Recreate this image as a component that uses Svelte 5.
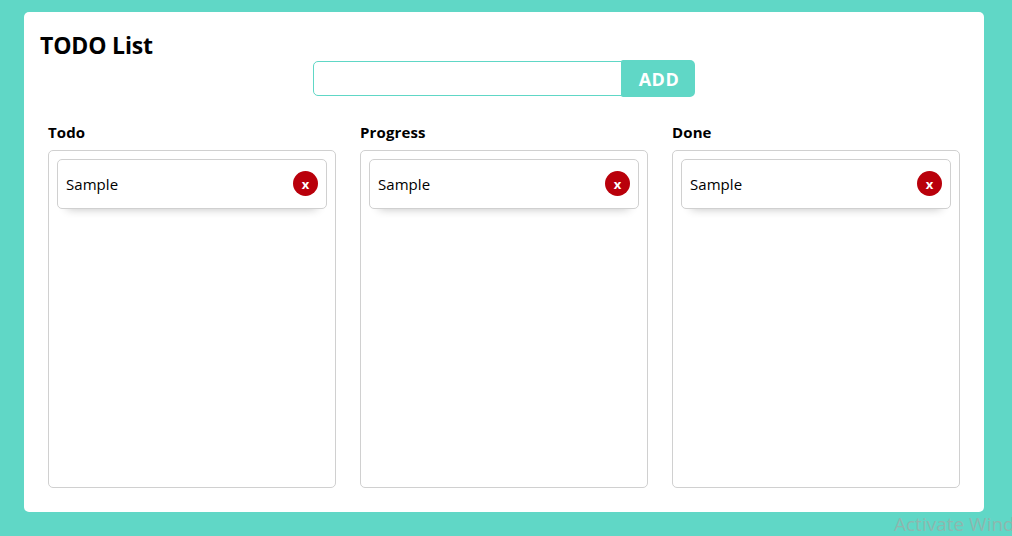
<script>
  let columns = $state([
    { name: 'Todo', items: ['Sample'] },
    { name: 'Progress', items: ['Sample'] },
    { name: 'Done', items: ['Sample'] }
  ]);
  let draft = $state('');

  function add(event) {
    event.preventDefault();
    if (!draft.trim()) return;
    columns[0].items.push(draft.trim());
    draft = '';
  }
</script>

<div class="page">
  <main class="board">
    <h1>TODO List</h1>
    <form class="entry" onsubmit={add}>
      <input bind:value={draft} />
      <button class="add">ADD</button>
    </form>
    <div class="columns">
      {#each columns as column}
        <section>
          <h2>{column.name}</h2>
          <div class="list">
            {#each column.items as item, i}
              <div class="item">
                <span class="label">{item}</span>
                <button class="remove" onclick={() => column.items.splice(i, 1)}>x</button>
              </div>
            {/each}
          </div>
        </section>
      {/each}
    </div>
  </main>
  <div class="watermark">Activate Windows</div>
</div>

<style>
  :global(body) { margin: 0; }
  .page {
    position: relative;
    box-sizing: border-box;
    height: 536px;
    padding: 12px 28px 24px 24px;
    overflow: hidden;
    background: #60d7c6;
    color: #000;
    font-family: "Open Sans", "Noto Sans", sans-serif;
  }
  .board {
    box-sizing: border-box;
    height: 500px;
    padding: 16px;
    border-radius: 5px;
    background: #fff;
  }
  h1 {
    height: 32px;
    margin: 0;
    font-size: 23px;
    line-height: 34px;
    font-weight: 700;
    letter-spacing: -0.17px;
    white-space: nowrap;
  }
  .entry {
    display: flex;
    align-items: center;
    width: 382px;
    height: 37px;
    margin-left: 273px;
  }
  input {
    box-sizing: border-box;
    width: 309px;
    height: 35px;
    padding: 8px;
    border: 1px solid #60d7c6;
    border-radius: 5px 0 0 5px;
    outline: none;
    font: 16px "Open Sans", sans-serif;
  }
  .add {
    width: 74px;
    height: 37px;
    margin-left: -1px;
    padding: 1px 0 0 2px;
    border: 0;
    border-radius: 2px 5px 5px 2px;
    background: #60d7c6;
    color: #fff;
    font: 700 18px "Open Sans", sans-serif;
    letter-spacing: 0.5px;
  }
  .columns {
    display: grid;
    grid-template-columns: repeat(3, 288px);
    gap: 24px;
    padding: 24px 8px 0;
  }
  h2 {
    height: 29px;
    margin: 0;
    font-size: 15px;
    line-height: 22px;
    font-weight: 700;
    letter-spacing: 0.12px;
  }
  .list {
    box-sizing: border-box;
    height: 338px;
    padding: 8px;
    border: 1px solid #d0d0d0;
    border-radius: 5px;
  }
  .item {
    display: flex;
    align-items: center;
    justify-content: space-between;
    box-sizing: border-box;
    height: 50px;
    padding: 0 8px;
    border: 1px solid #d0d0d0;
    border-radius: 5px;
    background: #fff;
    box-shadow: 0 10px 10px -10px #c0c0c0;
  }
  .label {
    font-size: 15px;
    letter-spacing: 0.05px;
    line-height: 22px;
  }
  .remove {
    width: 25px;
    height: 25px;
    margin-top: -1px;
    padding: 1px 0 0;
    border: 0;
    border-radius: 50%;
    background: #b9000b;
    color: #fff;
    font: 700 13px/24px "Open Sans", sans-serif;
  }
  .watermark {
    position: absolute;
    top: 511px;
    left: 894px;
    color: #8db7af;
    font-size: 19px;
    line-height: 26px;
    white-space: nowrap;
  }
</style>
